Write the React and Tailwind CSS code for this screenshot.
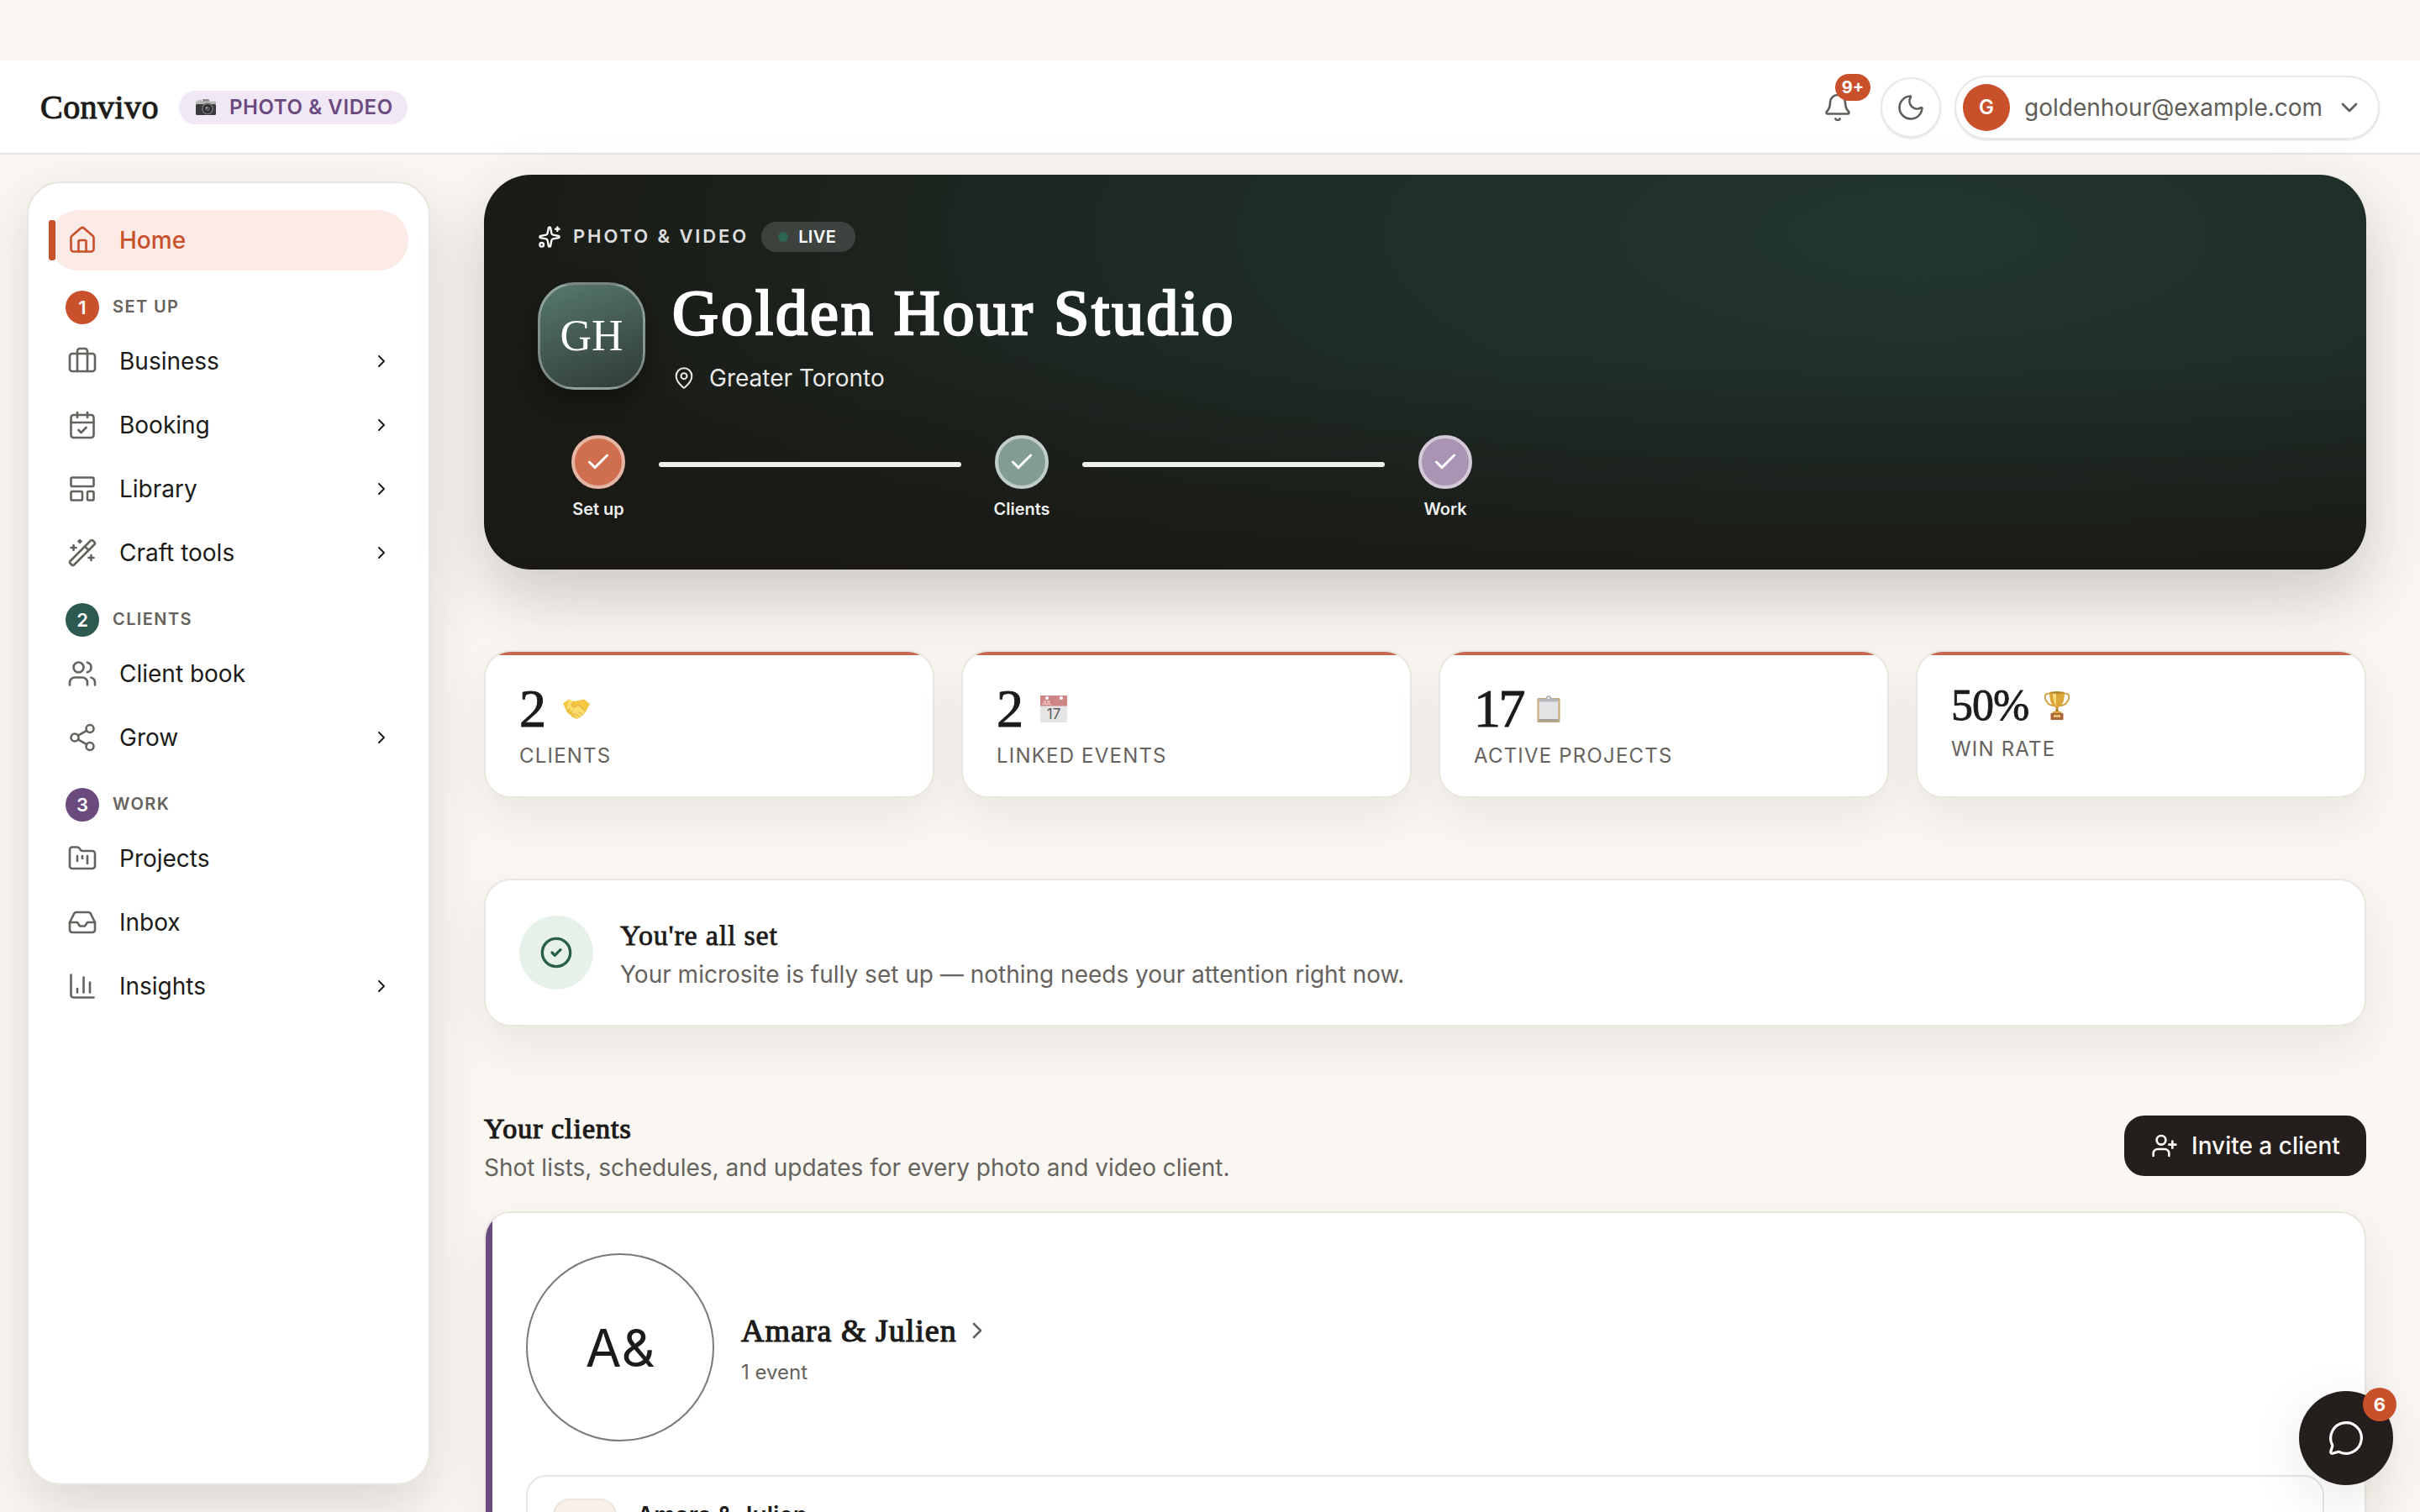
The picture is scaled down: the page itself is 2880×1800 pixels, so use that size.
import {
  Bell,
  CalendarCheck,
  Check,
  ChevronDown,
  ChevronRight,
  CircleCheck,
  FolderKanban,
  House,
  Inbox,
  MapPin,
  MessageCircle,
  Moon,
  Share2,
  Sparkles,
  UserPlus,
  Users,
  WandSparkles,
} from 'lucide-react';

const SERIF = "font-['Liberation_Serif',serif]";

function SuitcaseIcon({ className, strokeWidth }) {
  return (
    <svg viewBox="0 0 24 24" fill="none" stroke="currentColor" strokeWidth={strokeWidth} strokeLinecap="round" strokeLinejoin="round" className={className}>
      <path d="M16 20V4a2 2 0 0 0-2-2h-4a2 2 0 0 0-2 2v16" />
      <rect x="2" y="6" width="20" height="14" rx="2" />
    </svg>
  );
}

function TemplateIcon({ className, strokeWidth }) {
  return (
    <svg viewBox="0 0 24 24" fill="none" stroke="currentColor" strokeWidth={strokeWidth} strokeLinecap="round" strokeLinejoin="round" className={className}>
      <rect x="3" y="3" width="18" height="7" rx="1" />
      <rect x="3" y="14" width="9" height="7" rx="1" />
      <rect x="16" y="14" width="5" height="7" rx="1" />
    </svg>
  );
}

function ChartIcon({ className, strokeWidth }) {
  return (
    <svg viewBox="0 0 24 24" fill="none" stroke="currentColor" strokeWidth={strokeWidth} strokeLinecap="round" strokeLinejoin="round" className={className}>
      <path d="M3 3v16a2 2 0 0 0 2 2h16" />
      <path d="M18 17V9" />
      <path d="M13 17V5" />
      <path d="M8 17v-3" />
    </svg>
  );
}

const navGroups = [
  {
    step: 1,
    label: 'Set up',
    color: 'bg-[#c8502b]',
    items: [
      { label: 'Business', icon: SuitcaseIcon, expandable: true },
      { label: 'Booking', icon: CalendarCheck, expandable: true },
      { label: 'Library', icon: TemplateIcon, expandable: true },
      { label: 'Craft tools', icon: WandSparkles, expandable: true },
    ],
  },
  {
    step: 2,
    label: 'Clients',
    color: 'bg-[#2d5a50]',
    items: [
      { label: 'Client book', icon: Users },
      { label: 'Grow', icon: Share2, expandable: true },
    ],
  },
  {
    step: 3,
    label: 'Work',
    color: 'bg-[#6b4a80]',
    items: [
      { label: 'Projects', icon: FolderKanban },
      { label: 'Inbox', icon: Inbox },
      { label: 'Insights', icon: ChartIcon, expandable: true },
    ],
  },
];

const steps = [
  { label: 'Set up', color: 'bg-[#cf6f50] border-[#e5b6a4]' },
  { label: 'Clients', color: 'bg-[#819c95] border-[#c0cdca]' },
  { label: 'Work', color: 'bg-[#a994b3] border-[#d4c9d9]' },
];

function CameraEmoji() {
  return (
    <svg viewBox="0 0 24 20" className="h-5 w-6">
      <rect x="3" y="1" width="4" height="3" fill="#b9b9b9" />
      <rect x="8" y="0" width="8" height="5" rx="1" fill="#8b8b8b" />
      <rect x="0" y="2.5" width="24" height="5" rx="1" fill="#b5b5b3" />
      <rect x="0" y="6" width="24" height="13" rx="1.5" fill="#3b3b3d" />
      <circle cx="14" cy="11.5" r="7" fill="#6d6d70" />
      <circle cx="14" cy="11.5" r="5.2" fill="#2a2a2d" />
      <circle cx="14" cy="11.5" r="3" fill="#54545c" />
      <circle cx="12.8" cy="10.2" r="1.1" fill="#a9a9b5" />
    </svg>
  );
}

function HandshakeEmoji() {
  return (
    <svg viewBox="0 0 32 24" className="h-6 w-8">
      <path d="M0 5.500 7 0.500 13 3 18 2 25 0.500 32 6 28 13 26 17 20 22 16.500 24 12 22 5 16 3 12Z" fill="#f4c642" />
      <path d="M7 0.500 13 3 10 8 14 10 18 7 27 15 20 22 16 23 9 14 4 11Z" fill="#fadb6c" />
      <path d="M13 3 10 8q2 3 5 1l3-2 9 8M19 16l4 3M15 18l4 3M5 15l3-3M8 18l3-3M11 21l3-3" fill="none" stroke="#d9a233" strokeWidth="0.9" strokeLinecap="round" />
    </svg>
  );
}

function CalendarEmoji() {
  return (
    <svg viewBox="0 0 32 32" className="h-8 w-8">
      <rect width="32" height="32" rx="1" fill="#e5e5e6" />
      <path d="M1 0h30a1 1 0 0 1 1 1v11.500H0V1a1 1 0 0 1 1-1Z" fill="#cf8586" />
      <circle cx="8" cy="3" r="2" fill="#fff" />
      <circle cx="25" cy="3" r="2" fill="#fff" />
      <text x="2" y="10.500" fontSize="6" fill="#fff" fontFamily="Inter, sans-serif">JUL</text>
      <text x="16" y="28" textAnchor="middle" fontSize="17" fill="#5c5c5e" fontFamily="Inter, sans-serif">17</text>
    </svg>
  );
}

function ClipboardEmoji() {
  return (
    <svg viewBox="0 0 28 32" className="h-8 w-7">
      <rect x="0.500" y="3" width="27" height="29" rx="1.500" fill="#c2a578" />
      <rect x="2.500" y="5" width="23" height="25" fill="#e3e4e6" />
      <rect x="2.500" y="28" width="23" height="2.500" fill="#a5a09a" />
      <path d="M3 4h7q1-4 4-4t4 4h7v3.500H3Z" fill="#b6b7bd" />
      <circle cx="14" cy="3" r="1.200" fill="#f2f2f2" />
    </svg>
  );
}

function TrophyEmoji() {
  return (
    <svg viewBox="0 0 30 34" className="h-[34px] w-[30px]">
      <path d="M7 3C0 1 0 7 2 11s5 6 9 6M23 3c7-2 7 4 5 8s-5 6-9 6" fill="none" stroke="#d19c33" strokeWidth="1.800" />
      <path d="M6 1h18c0 9-2 16-7.500 18.500h-3C8 17 6 10 6 1Z" fill="#dca636" />
      <path d="M10 1h4v17C11 14 10 8 10 1Z" fill="#f6dc79" />
      <ellipse cx="15" cy="1.500" rx="9" ry="1.500" fill="#b9852c" />
      <path d="M14 19h2l1 5h-4Z" fill="#b9802a" />
      <path d="M10 24h10l1 3H9Z" fill="#d9a23a" />
      <rect x="7.500" y="26" width="15" height="8" rx="0.800" fill="#a9653a" />
      <rect x="11" y="28" width="8" height="3" fill="#e8c169" />
    </svg>
  );
}

const stats = [
  { value: '2', label: 'Clients', emoji: HandshakeEmoji, spacing: 'pr-1' },
  { value: '2', label: 'Linked events', emoji: CalendarEmoji, spacing: 'pr-1' },
  { value: '17', label: 'Active projects', emoji: ClipboardEmoji, spacing: 'tracking-[-2.5px]' },
  { value: '50%', label: 'Win rate', emoji: TrophyEmoji, spacing: 'tracking-[-1px] pr-[3px]', compact: true },
];

function Header() {
  return (
    <header className="mt-[72px] flex h-28 shrink-0 items-center border-b-2 border-[#e9e6e0] bg-white px-12 pt-0.5">
      <span className={`${SERIF} text-[40px] leading-none tracking-[0.45px] text-[#1c1b19] [-webkit-text-stroke:1.1px_#1c1b19]`}>
        Convivo
      </span>
      <span className="ml-6 flex h-10 w-[272px] items-center gap-4 rounded-full bg-[#f1e8f5] pl-5 text-2xl font-semibold tracking-[0.6px] whitespace-nowrap text-[#6b4a80]">
        <CameraEmoji />
        PHOTO &amp; VIDEO
      </span>

      <div className="ml-auto flex items-center">
        <button className="relative mr-[33px] text-[#605d59]">
          <Bell className="size-9" strokeWidth={1.75} />
          <span className="absolute -top-[22px] left-[15px] flex h-8 w-[42px] items-center justify-center rounded-full bg-[#c8502b] text-xl font-bold text-white">
            9+
          </span>
        </button>
        <button className="mr-4 flex size-[72px] items-center justify-center rounded-full border-2 border-[#ebe8e3] text-[#605d59] shadow-sm">
          <Moon className="size-9" strokeWidth={1.75} />
        </button>
        <button className="flex h-[76px] w-[506px] items-center rounded-full border-2 border-[#ebe8e3] pl-2 text-[28px] text-[#605d59] shadow-sm">
          <span className="mr-[17px] flex size-14 shrink-0 items-center justify-center rounded-full bg-[#c8502b] text-2xl font-semibold text-white">
            G
          </span>
          goldenhour@example.com
          <ChevronDown className="mr-[18px] ml-auto size-8" strokeWidth={2} />
        </button>
      </div>
    </header>
  );
}

function NavItem({ item }) {
  const Icon = item.icon;
  return (
    <a className="flex h-[72px] items-center gap-[26px] rounded-full pr-5 pl-[22px] text-[28px] text-[#1c1b19]">
      <Icon className="size-9 text-[#66625e]" strokeWidth={1.75} />
      {item.label}
      {item.expandable && <ChevronRight className="ml-auto size-6" strokeWidth={2} />}
    </a>
  );
}

function Sidebar() {
  return (
    <aside className="h-[1552px] w-[480px] shrink-0 rounded-[40px] border-2 border-[#e9e6e0] bg-white px-6 pt-8 shadow-[0_24px_64px_rgba(40,36,28,0.15)]">
      <a className="relative flex h-[72px] items-center gap-[26px] rounded-full bg-[#fbeae6] px-[22px] text-[28px] font-medium text-[#c8502b]">
        <span className="absolute top-3 left-0 h-12 w-2 rounded-[3px] bg-[#c8502b]" />
        <House className="size-9" strokeWidth={1.75} />
        Home
      </a>
      {navGroups.map((group) => (
        <section key={group.step}>
          <div className="mt-6 mb-2 flex h-10 items-center gap-4 pl-5">
            <span className={`flex size-10 items-center justify-center rounded-full text-[22px] font-semibold text-white ${group.color}`}>
              {group.step}
            </span>
            <span className="pb-0.5 text-xl font-semibold tracking-[1.4px] text-[#66625e] uppercase">{group.label}</span>
          </div>
          <nav className="flex flex-col gap-1">
            {group.items.map((item) => (
              <NavItem key={item.label} item={item} />
            ))}
          </nav>
        </section>
      ))}
    </aside>
  );
}

function Hero() {
  return (
    <section className="h-[470px] rounded-[56px] bg-[linear-gradient(to_bottom,rgba(26,24,20,0)_45%,rgba(26,24,20,0.75)_100%),radial-gradient(ellipse_75%_130%_at_76%_15%,#22362f_0%,#1f2d27_45%,#1a1b16_100%)] px-16 pt-14 text-white shadow-[0_32px_80px_rgba(40,36,28,0.22)]">
      <div className="flex h-9 items-center">
        <Sparkles className="size-7" strokeWidth={2} />
        <span className="ml-3.5 pb-0.5 text-[22px] font-semibold tracking-[2.9px] text-white/85">PHOTO &amp; VIDEO</span>
        <span className="ml-[15px] flex h-9 w-28 items-center gap-3 rounded-full bg-white/15 pl-5 text-xl font-semibold tracking-[0.4px]">
          <span className="size-3 rounded-full bg-[#2d6453]" />
          LIVE
        </span>
      </div>

      <div className="mt-9 flex h-32 items-start gap-8">
        <div className={`${SERIF} flex size-32 items-center justify-center rounded-[44px] border-3 border-white/35 bg-linear-160 from-[#57796f] to-[#2f3b36] text-[52px] shadow-[0_12px_28px_rgba(0,0,0,0.35)]`}>
          GH
        </div>
        <div>
          <h1 className={`${SERIF} text-[76px] leading-[72px] tracking-[3px] whitespace-nowrap [-webkit-text-stroke:2.6px_white]`}>
            Golden Hour Studio
          </h1>
          <p className="mt-6 flex items-center gap-4 text-[28px] leading-9 text-white/90">
            <MapPin className="size-7" strokeWidth={1.75} />
            Greater Toronto
          </p>
        </div>
      </div>

      <ol className="mt-[54px] flex">
        {steps.map((step, i) => (
          <li key={step.label} className="flex">
            {i > 0 && <span className="mt-8 h-1.5 w-[360px] rounded-full bg-[#eef0ec]" />}
            <div className="flex w-36 flex-col items-center">
              <span className={`flex size-16 items-center justify-center rounded-full border-4 ${step.color}`}>
                <Check className="size-8" strokeWidth={2.25} />
              </span>
              <span className="mt-2 text-xl leading-8 font-semibold text-white/95">{step.label}</span>
            </div>
          </li>
        ))}
      </ol>
    </section>
  );
}

function StatCard({ stat }) {
  const Emoji = stat.emoji;
  return (
    <div className="h-44 overflow-hidden rounded-[32px] border-2 border-[#e9e6e0] bg-white shadow-[0_24px_56px_rgba(40,36,28,0.08)]">
      <div className="h-1 bg-[#c5674a]" />
      <div className="px-10 pt-8">
        <div className={`flex items-center gap-4 ${stat.compact ? 'h-14' : 'h-16'}`}>
          <span className={`${SERIF} text-[#1c1b19] ${stat.spacing} ${stat.compact ? 'text-[52px] [-webkit-text-stroke:0.8px_#1c1b19]' : 'text-[64px] [-webkit-text-stroke:1px_#1c1b19]'}`}>
            {stat.value}
          </span>
          <Emoji />
        </div>
        <div className="mt-2 text-2xl leading-8 tracking-[1.2px] text-[#66625e] uppercase">{stat.label}</div>
      </div>
    </div>
  );
}

function ClientCard() {
  return (
    <article className="flex h-[700px] overflow-hidden rounded-[32px] border-2 border-[#e9e6e0] bg-white shadow-[0_24px_56px_rgba(40,36,28,0.08)]">
      <div className="w-2 bg-[#6b4a80]" />
      <div className="flex-1 pt-12 pr-12 pl-10">
        <div className="flex items-center gap-8">
          <div className="flex size-56 items-center justify-center rounded-full border-2 border-[#7b7a79] text-[62px] text-[#1c1b19]">
            A&amp;
          </div>
          <div className="pt-[5px]">
            <h3 className={`${SERIF} flex items-center gap-2 text-[38px] leading-[44px] tracking-[1px] text-[#1c1b19] [-webkit-text-stroke:1.2px_#1c1b19]`}>
              Amara &amp; Julien
              <ChevronRight className="size-8 text-[#66625e]" strokeWidth={2} />
            </h3>
            <p className="mt-2.5 text-2xl leading-9 text-[#66625e]">1 event</p>
          </div>
        </div>
        <div className="mt-10 flex h-[200px] gap-6 rounded-3xl border-2 border-[#e7e6e4] px-[30px] pt-[26px]">
          <div className="size-[76px] rounded-[20px] border-2 border-[#ece6dc] bg-[#f7f0e8]" />
          <div className="text-[28px] leading-10 font-semibold text-[#1c1b19]">Amara &amp; Julien</div>
        </div>
      </div>
    </article>
  );
}

export default function App() {
  return (
    <div className="relative flex h-[1800px] w-[2880px] flex-col overflow-hidden bg-[#faf7f3] font-[Inter,sans-serif]">
      <Header />
      <div className="flex min-h-0 flex-1 gap-16 pr-16 pl-8">
        <div className="pt-8">
          <Sidebar />
        </div>
        <main className="flex-1 pt-6">
          <Hero />

          <div className="mt-24 grid grid-cols-4 gap-8">
            {stats.map((stat) => (
              <StatCard key={stat.label} stat={stat} />
            ))}
          </div>

          <div className="mt-24 flex h-44 items-center gap-8 rounded-[32px] border-2 border-[#e9e6e0] bg-white px-10 shadow-[0_24px_56px_rgba(40,36,28,0.08)]">
            <div className="flex size-[88px] items-center justify-center rounded-full bg-[#e6f1e9] text-[#2a5f4c]">
              <CircleCheck className="size-10" strokeWidth={2} />
            </div>
            <div className="pt-1">
              <h2 className={`${SERIF} text-[34px] leading-[44px] tracking-[0.8px] text-[#1c1b19] [-webkit-text-stroke:0.8px_#1c1b19]`}>
                You're all set
              </h2>
              <p className="mt-1 text-[28px] leading-10 text-[#66625e]">
                Your microsite is fully set up — nothing needs your attention right now.
              </p>
            </div>
          </div>

          <div className="mt-[98px] mb-8 flex items-start justify-between">
            <div className="pt-0.5">
              <h2 className={`${SERIF} text-[34px] leading-[44px] tracking-[1px] text-[#1c1b19] [-webkit-text-stroke:1.2px_#1c1b19]`}>
                Your clients
              </h2>
              <p className="mt-1 text-[28px] leading-10 text-[#66625e]">
                Shot lists, schedules, and updates for every photo and video client.
              </p>
            </div>
            <button className="mt-2 flex h-[72px] w-72 items-center gap-4 rounded-3xl bg-[#241e1c] pl-8 text-[28px] font-medium text-[#fdf9f6]">
              <UserPlus className="size-8" strokeWidth={2} />
              Invite a client
            </button>
          </div>

          <ClientCard />
        </main>
      </div>

      <button className="absolute right-8 bottom-8 flex size-28 items-center justify-center rounded-full bg-[#241e1c] text-white shadow-[0_16px_64px_rgba(40,30,20,0.1)]">
        <MessageCircle className="size-11" strokeWidth={1.75} />
        <span className="absolute -top-1 -right-1 flex size-10 items-center justify-center rounded-full bg-[#c8502b] text-[22px] font-bold">
          6
        </span>
      </button>
    </div>
  );
}
